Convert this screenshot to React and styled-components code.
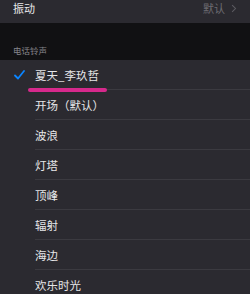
import styled, { createGlobalStyle } from "styled-components";

const GlobalStyle = createGlobalStyle`
  html, body {
    margin: 0;
    padding: 0;
    background: #111113;
  }
  body {
    font-family: "Noto Sans CJK SC", "Noto Sans", sans-serif;
  }
`

const tones = ["开场（默认）", "波浪", "灯塔", "顶峰", "辐射", "海边", "欢乐时光"]

export default function App() {
    return (
        <>
            <GlobalStyle />
            <Screen>
                <TopCell>
                    <Label>振动</Label>
                    <Value>
                        默认
                        <Chevron viewBox="0 0 8 12">
                            <path d="M1.5 1.5 L6 6 L1.5 10.5" />
                        </Chevron>
                    </Value>
                </TopCell>
                <SectionHeader>电话铃声</SectionHeader>
                <List>
                    <ToneRow>
                        <CheckSlot>
                            <svg width="11" height="10" viewBox="0 0 11 10">
                                <path d="M1 5.5 L4 8.5 L10 1" fill="none" stroke="#0a84ff" strokeWidth="1.8" strokeLinecap="round" strokeLinejoin="round" />
                            </svg>
                        </CheckSlot>
                        <ToneText>
                            夏天_李玖哲
                            <Marker />
                        </ToneText>
                    </ToneRow>
                    {tones.map(t => (
                        <ToneRow key={t}>
                            <CheckSlot />
                            <ToneText>{t}</ToneText>
                        </ToneRow>
                    ))}
                </List>
            </Screen>
        </>
    )
}

const Screen = styled.div`
width: 250px;
height: 294px;
overflow: hidden;
background: #111113;
display: flex;
flex-direction: column;
`

const TopCell = styled.div`
height: 23px;
background: #2b2a30;
display: flex;
align-items: flex-start;
justify-content: space-between;
padding: 0 13px;
flex-shrink: 0;
`

const Label = styled.span`
font-size: 11px;
line-height: 16px;
color: #e8e8ea;
`

const Value = styled.span`
display: flex;
align-items: center;
gap: 6px;
font-size: 11px;
line-height: 16px;
color: #6d6c72;
margin-right: 0;
`

const Chevron = styled.svg`
width: 6px;
height: 9px;
fill: none;
stroke: #5d5c62;
stroke-width: 1.4;
`

const SectionHeader = styled.div`
height: 37px;
box-sizing: border-box;
padding: 0 13px 4px;
display: flex;
align-items: flex-end;
font-size: 8.5px;
color: #86858b;
flex-shrink: 0;
`

const List = styled.div`
background: #2b2a30;
display: flex;
flex-direction: column;
flex: 1;
`

const ToneRow = styled.div`
height: 30px;
display: flex;
align-items: stretch;
flex-shrink: 0;
`

const CheckSlot = styled.div`
width: 35px;
flex-shrink: 0;
display: flex;
align-items: center;
padding-left: 14px;
box-sizing: border-box;
`

const ToneText = styled.div`
position: relative;
flex: 1;
display: flex;
align-items: center;
font-size: 11.5px;
color: #e6e6e8;
border-bottom: 1px solid #3b3a40;
`

const Marker = styled.span`
position: absolute;
left: -7px;
width: 79px;
bottom: -3px;
height: 4px;
border-radius: 2px;
background: #d6298c;
`
